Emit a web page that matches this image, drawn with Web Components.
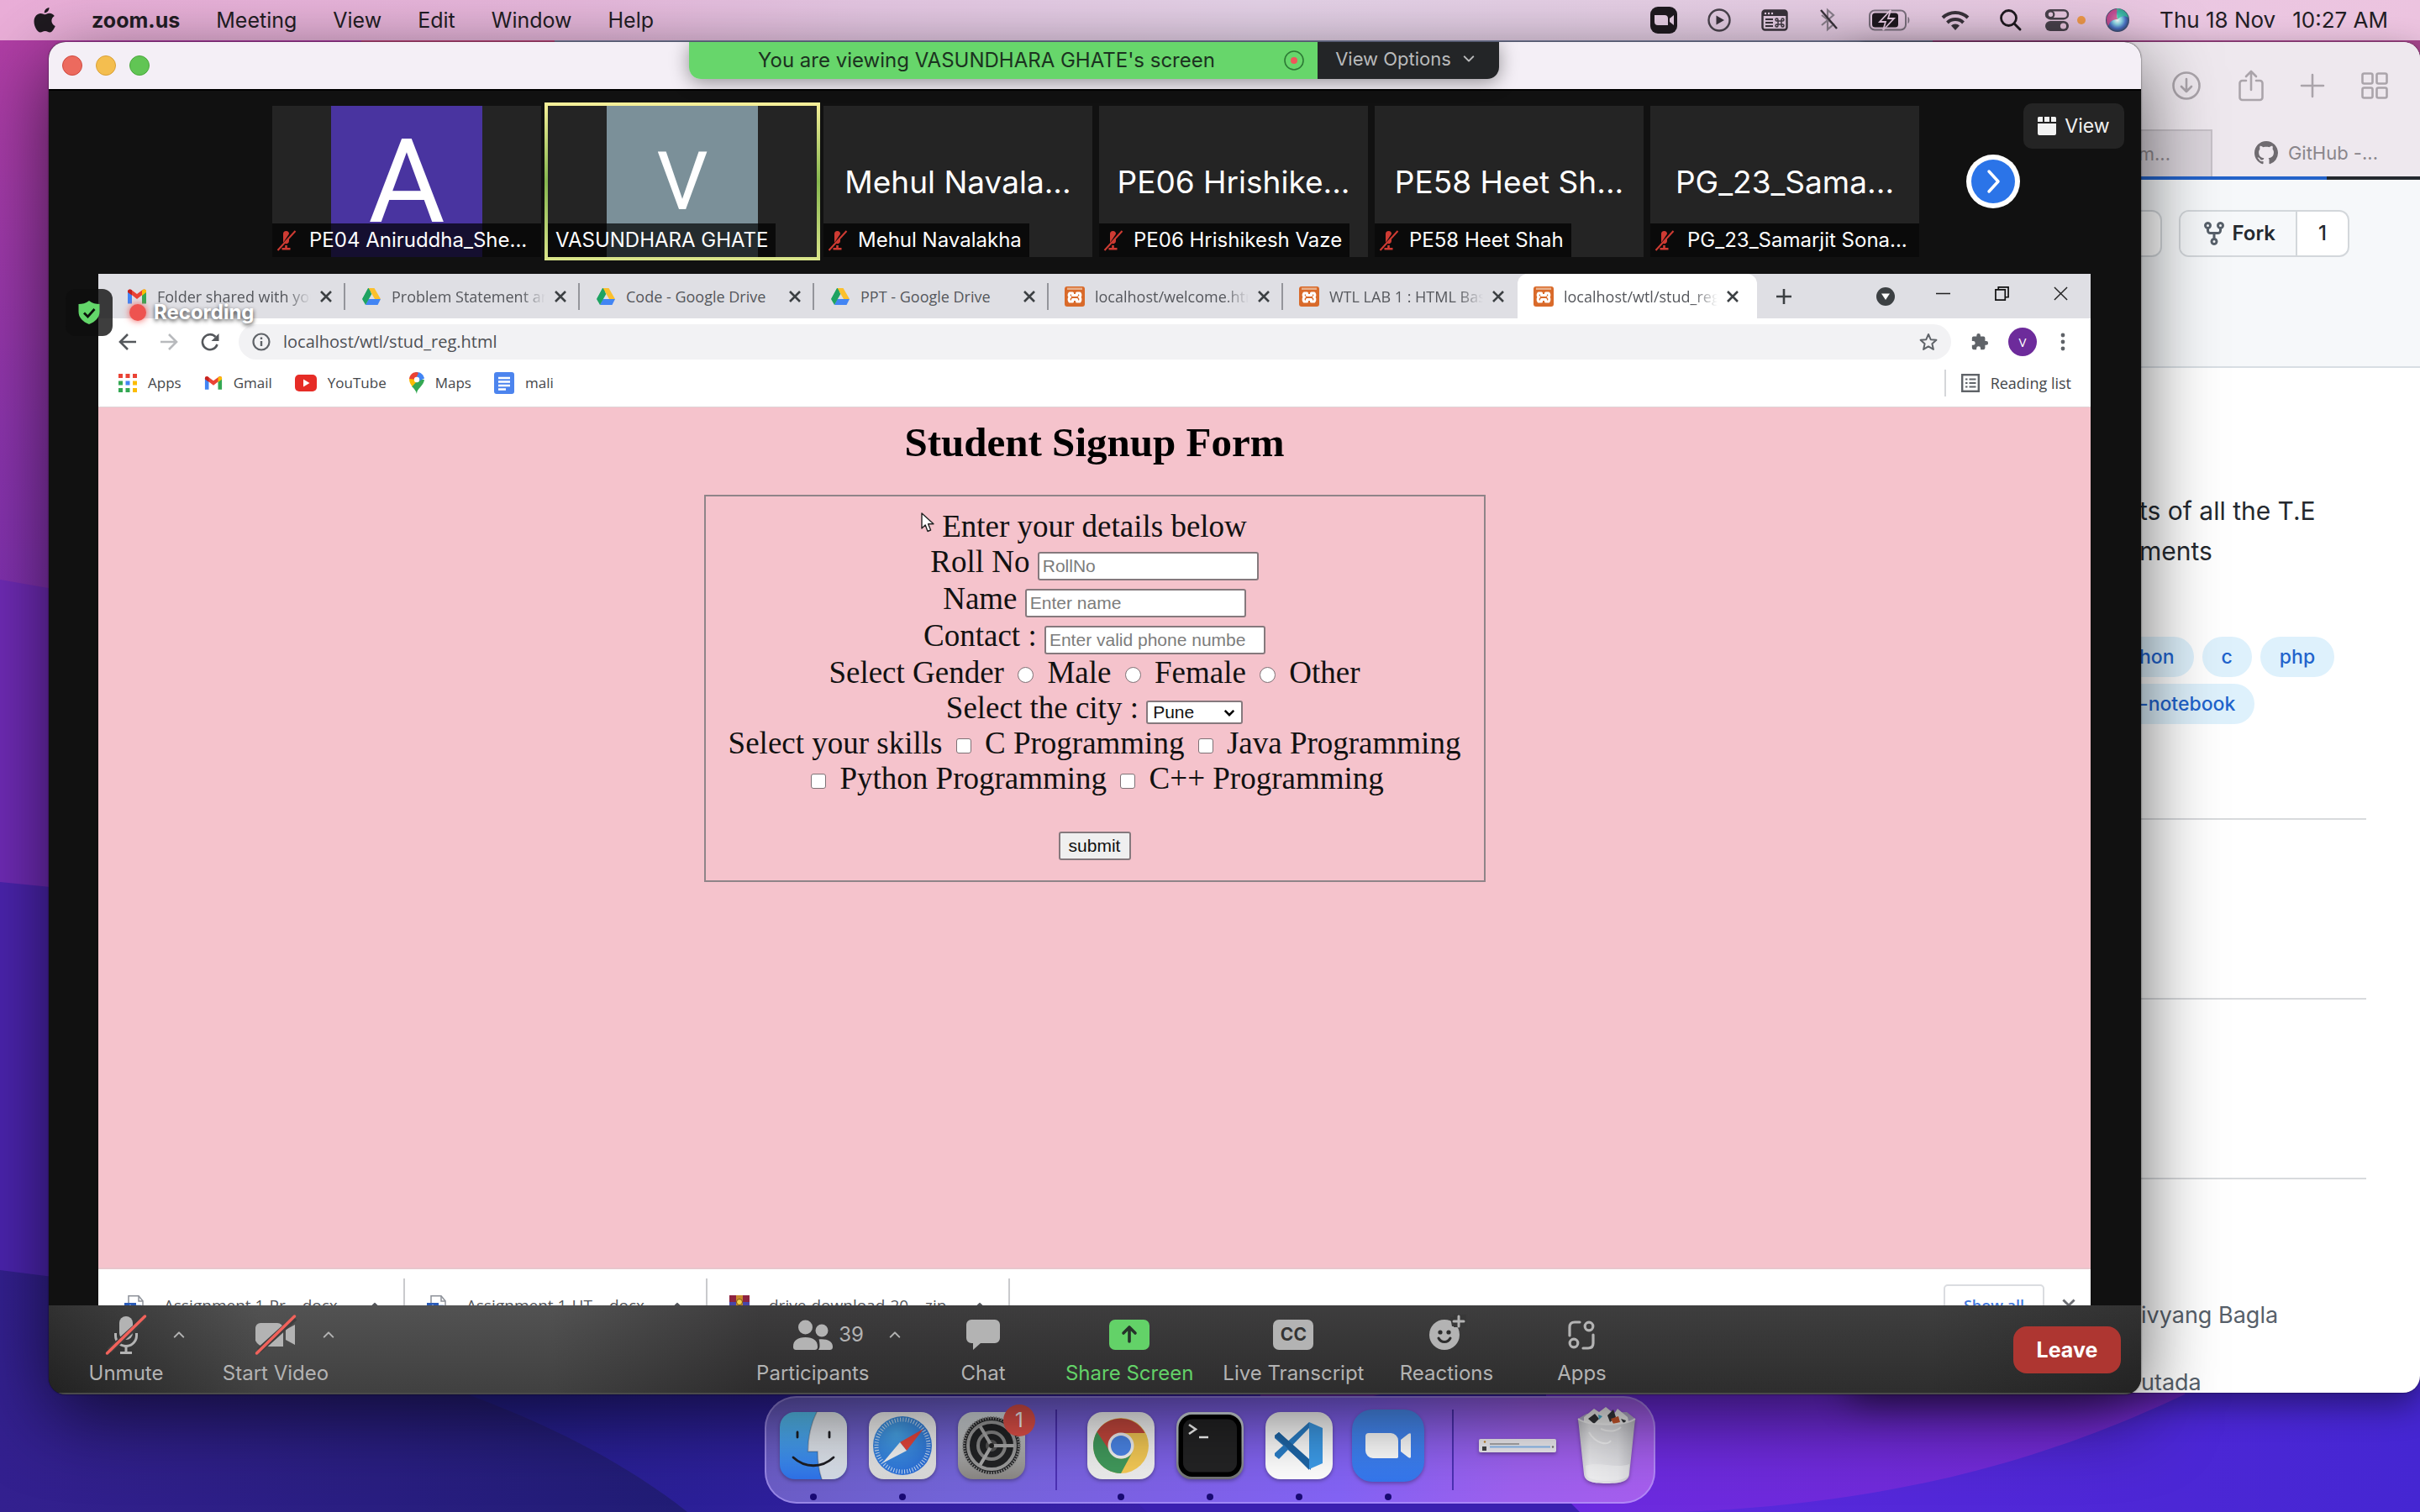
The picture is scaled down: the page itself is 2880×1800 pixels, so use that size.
<!DOCTYPE html>
<html lang="en">
<head>
<meta charset="utf-8">
<title>Zoom Meeting</title>
<style>
  html, body { height: 100%; margin: 0; overflow: hidden; }
  body { font-family: Inter, "Liberation Sans", sans-serif; color: #1f1c22; }
</style>
</head>
<body>
<mac-desktop>
  <menu-bar slot="menu"></menu-bar>
  <safari-window slot="back"></safari-window>
  <zoom-window slot="front">
    <chrome-window>
      <signup-form></signup-form>
    </chrome-window>
  </zoom-window>
  <mac-dock slot="dock"></mac-dock>
</mac-desktop>

<script>
/* ---------- icon set ---------- */
const DRIVE = `<path fill="#1ea362" d="M8 2h5L6 14 1.5 14.500z"/><path fill="#fbc02d" d="M8.500 2h7l7.500 13h-7z"/><path fill="#4285f4" d="M5 22l3.500-7H23l-3.500 7z"/><path fill="#1ea362" d="M8.500 2 1 15l4 7 7.300-13z"/>`;
const GMAIL = `<path fill="#4285f4" d="M1 6v14.500h5V10z"/><path fill="#34a853" d="M18 20.500h5V6l-5 4z"/><path fill="#ea4335" d="M1 6c0-2.500 2.500-3.300 4.300-2L12 9l6.700-5C20.500 2.700 23 3.500 23 6l-5 4.300-6 4.700-6-4.700z"/><path fill="#fbbc04" d="M18 5v6l5-4V5.500C23 3 20 3 18 4.500z"/><path fill="#c5221f" d="M1 6c0-2.500 3-3.200 5-1.500v6L1 7z"/>`;
const XAMPP = `<rect x="0" y="0" width="24" height="24" rx="3" fill="#d96a2a"/><rect x="3" y="1.500" width="18" height="2.500" fill="#e9b08a"/><path fill="none" stroke="#fff" stroke-width="3" stroke-linejoin="round" d="M9.500 10.500V8H6c-1.500 2-1 4 .5 4.500C5 13.500 4.500 16 6 18h3.500v-2.500h5V18H18c1.500-2 1-4.500-.5-5.500C19 12 19.500 10 18 8h-3.500v2.500z"/>`;
const WORD = `<path fill="#fff" stroke="#8d9199" stroke-width="1.500" d="M5 .8h12l5 6V24H5z"/><path fill="none" stroke="#8d9199" stroke-width="1.500" d="M17 1v6h5"/><path stroke="#a9c4ec" stroke-width="1.500" d="M14 12h6M14 16h6M14 20h6"/><rect y="9" width="14" height="14" fill="#2a5bb8"/><path fill="none" stroke="#fff" stroke-width="1.600" d="M3 12.500 5 19l2-6 2 6 2-6.500"/>`;
const MICOFF = `<path fill="#cf3b33" d="M8.500 4.500a3.500 3.500 0 0 1 7 0L8.500 15zM15.500 9v4a3.500 3.500 0 0 1-5 3zM10.700 18h2.600v3H17v2.500H7V21h3.700z"/><path stroke="#cf3b33" stroke-width="2" d="M23 1 2 24"/>`;
const SLASH = `<path stroke="#3f3f3f" stroke-width="7" d="M4 43 47 4"/><path stroke="#f0625b" stroke-width="3.500" stroke-linecap="round" d="M1.500 46 46.500 2"/>`;
const ICONS = {
  apple: ['0 0 26 32', `<path fill="#1f1a20" d="M18.500 1c.3 3.300-2.700 6.500-5.700 6.400C12.400 4.300 15.600 1.200 18.500 1zM13.300 9.300c1.500 0 3-1.500 5.600-1.500 2.500 0 4.700 1.300 5.900 3.200-5 3-4.200 9.800.9 12-1 2.900-3.500 7.300-6.200 7.500-2.300.1-3-1.500-5.800-1.500-2.700 0-3.600 1.500-5.700 1.500C4.500 30.600.5 23.600.5 17.800c0-6.200 4-9.600 7.800-9.700 2.200 0 3.800 1.200 5 1.200z"/>`],
  zoombar: ['0 0 32 32', `<rect width="32" height="32" rx="9" fill="#1f1a20"/><path fill="#ecd3ea" d="M5 10h12a4 4 0 0 1 4 4v8H9a4 4 0 0 1-4-4zM23 14l5-4v12l-5-4z"/>`],
  play: ['0 0 28 28', `<circle cx="14" cy="14" r="12.500" fill="none" stroke="#4a434d" stroke-width="2.400"/><path fill="#3a333c" d="M10.500 8.500 20 14l-9.500 5.500z"/>`],
  cmdwin: ['0 0 32 26', `<rect x="1.500" y="1.500" width="29" height="23" rx="3" fill="none" stroke="#3a333c" stroke-width="2.400"/><path fill="#3a333c" d="M1 2h30v6H1z"/><g fill="#ecd3ea"><circle cx="5" cy="5" r="1.200"/><circle cx="9" cy="5" r="1.200"/><circle cx="13" cy="5" r="1.200"/></g><path stroke="#3a333c" stroke-width="2" d="M5 12h9M5 16h9M5 20h9"/><g fill="none" stroke="#3a333c" stroke-width="1.400"><rect x="20" y="14" width="4" height="4"/><circle cx="18.500" cy="12.500" r="1.500"/><circle cx="25.500" cy="12.500" r="1.500"/><circle cx="18.500" cy="19.500" r="1.500"/><circle cx="25.500" cy="19.500" r="1.500"/></g>`],
  btoff: ['0 0 24 28', `<path fill="none" stroke="#8b808d" stroke-width="2.200" d="M4 8l14 11-7 6V2l7 6L4 20"/><path stroke="#3a333c" stroke-width="2.400" d="M3 2l19 22"/>`],
  battery: ['0 0 50 26', `<rect x="1" y="1.500" width="43" height="23" rx="6" fill="none" stroke="#7d7280" stroke-width="2"/><path fill="#7d7280" d="M46.500 9c2.500 1 2.500 7 0 8z"/><rect x="4" y="4.500" width="31" height="17" rx="3.500" fill="#1f1a20"/><path fill="#1f1a20" stroke="#ecd0e8" stroke-width="1.800" d="M26 1 13 15h7l-3 10 13-14h-7z"/>`],
  wifi: ['0 0 34 24', `<g fill="none" stroke="#3a333c" stroke-width="4"><path d="M2 9a21.500 21.500 0 0 1 30 0"/><path d="M7.500 15a13.500 13.500 0 0 1 19 0"/></g><path fill="#3a333c" d="M17 24l-5-5.500a7 7 0 0 1 10 0z"/>`],
  search: ['0 0 26 26', `<circle cx="10.500" cy="10.500" r="9" fill="none" stroke="#1f1a20" stroke-width="2.800"/><path stroke="#1f1a20" stroke-width="3" stroke-linecap="round" d="M17.500 17.500 24 24"/>`],
  control: ['0 0 28 26', `<rect x="1" y="1.200" width="26" height="10" rx="5" fill="none" stroke="#4a434d" stroke-width="2.400"/><circle cx="6.500" cy="6.200" r="3.800" fill="none" stroke="#4a434d" stroke-width="2.200"/><rect y="14" width="28" height="12" rx="6" fill="#4a434d"/><circle cx="21.500" cy="20" r="3.600" fill="#ecc8e2"/>`],
  siri: ['0 0 28 28', `<defs><radialGradient id="s" cx=".5" cy=".5" r=".5"><stop offset="0" stop-color="#fff"/><stop offset=".35" stop-color="#8fdcea"/><stop offset=".7" stop-color="#4a72c8"/><stop offset="1" stop-color="#3a4a6a"/></radialGradient></defs><circle cx="14" cy="14" r="14" fill="url(#s)"/><path fill="#e0468a" opacity=".8" d="M1 12c1-7 8-12 15-11-4 3-3 8-2 12C9 13 5 15 3 21c-2-3-2-6-2-9z"/><path fill="#35c79a" opacity=".75" d="M13 0c8 0 13 6 14 11-5-3-9-2-13 2z"/>`],
  rec: ['0 0 24 24', `<circle cx="12" cy="12" r="11" fill="none" stroke="#2d7a35" stroke-width="1.600"/><circle cx="12" cy="12" r="4" fill="#f0555a"/>`],
  chevdown: ['0 0 16 10', `<path fill="none" stroke="currentColor" stroke-width="2.400" stroke-linecap="round" stroke-linejoin="round" d="M2 2l6 6 6-6"/>`],
  chevup: ['0 0 16 10', `<path fill="none" stroke="currentColor" stroke-width="2.400" stroke-linecap="round" stroke-linejoin="round" d="M2 8l6-6 6 6"/>`],
  micoff: ['0 0 24 25', MICOFF],
  next: ['0 0 64 64', `<circle cx="32" cy="32" r="32" fill="#fff"/><circle cx="32" cy="32" r="26" fill="#2b74e8"/><path fill="none" stroke="#fff" stroke-width="3.500" stroke-linecap="round" stroke-linejoin="round" d="M27 20l11 12-11 12"/>`],
  gallery: ['0 0 22 22', `<path fill="#f2f2f2" d="M0 1.500A1.500 1.500 0 0 1 1.500 0H6v6H0zM8 0h6v6H8zM16 0h4.500A1.500 1.500 0 0 1 22 1.500V6h-6zM0 8h22v12a2 2 0 0 1-2 2H2a2 2 0 0 1-2-2z"/>`],
  shield: ['0 0 26 28', `<path fill="#63d66a" d="M13 0c4 3 8 4 12.500 4v9c0 7-5 12-12.500 15C5.500 25 .5 20 .5 13V4C5 4 9 3 13 0z"/><path fill="none" stroke="#0b120c" stroke-width="2.800" d="M7 14.500l4.500 4.500 8-9"/>`],
  gmail: ['0 0 24 24', GMAIL], drive: ['0 0 24 24', DRIVE], xampp: ['0 0 24 24', XAMPP],
  word: ['0 0 24 24', WORD],
  rar: ['0 0 24 24', `<rect width="24" height="8" fill="#8d2340"/><rect y="8" width="24" height="8" fill="#4747a8"/><rect y="16" width="24" height="8" fill="#2f7a45"/><rect x="8" width="8" height="24" fill="#c88a2c"/><circle cx="12" cy="8" r="3.500" fill="#f2d24a" stroke="#7a4b10"/>`],
  x: ['0 0 20 20', `<path stroke="currentColor" stroke-width="2.600" d="M4 4l12 12M16 4 4 16"/>`],
  plus: ['0 0 20 20', `<path stroke="currentColor" stroke-width="2.600" d="M10 1v18M1 10h18"/>`],
  drop: ['0 0 22 22', `<circle cx="11" cy="11" r="11" fill="#3c4043"/><path fill="#fff" d="M6 7.500h10L11 15z"/>`],
  min: ['0 0 18 18', `<path stroke="#222" stroke-width="1.600" d="M0 9h18"/>`],
  restore: ['0 0 18 18', `<path fill="none" stroke="#111" stroke-width="1.800" d="M1 4h12v13H1zM4.500 4V1H17v12.500h-4"/>`],
  close: ['0 0 18 18', `<path stroke="#222" stroke-width="1.500" d="M1 1l16 16M17 1 1 17"/>`],
  back: ['0 0 22 22', `<path fill="none" stroke="currentColor" stroke-width="2.600" d="M21 11H3M11 2l-9 9 9 9"/>`],
  fwd: ['0 0 22 22', `<path fill="none" stroke="currentColor" stroke-width="2.600" d="M1 11h18M11 2l9 9-9 9"/>`],
  reload: ['0 0 22 22', `<path fill="none" stroke="#55585c" stroke-width="2.600" d="M19.500 14A9 9 0 1 1 17.500 5"/><path fill="#55585c" d="M21.500 1v9h-9z"/>`],
  info: ['0 0 22 22', `<circle cx="11" cy="11" r="9.500" fill="none" stroke="#5f6368" stroke-width="2.200"/><path stroke="#5f6368" stroke-width="2.400" d="M11 10v6M11 5.500V8"/>`],
  star: ['0 0 22 22', `<path fill="none" stroke="#5f6368" stroke-width="2" stroke-linejoin="round" d="M11 2l2.700 6.200 6.700.6-5 4.500 1.500 6.600L11 16.400l-5.900 3.500 1.500-6.600-5-4.500 6.700-.6z"/>`],
  puzzle: ['0 0 24 24', `<path fill="#5f6368" d="M20.500 11H19V7a2 2 0 0 0-2-2h-4V3.500a2.500 2.500 0 0 0-5 0V5H4a2 2 0 0 0-2 2v3.800h1.500a2.700 2.700 0 0 1 0 5.400H2V20a2 2 0 0 0 2 2h3.800v-1.500a2.700 2.700 0 0 1 5.400 0V22H17a2 2 0 0 0 2-2v-4h1.500a2.500 2.500 0 0 0 0-5z"/>`],
  dots: ['0 0 6 22', `<g fill="#5f6368"><circle cx="3" cy="3" r="2.400"/><circle cx="3" cy="11" r="2.400"/><circle cx="3" cy="19" r="2.400"/></g>`],
  apps: ['0 0 22 22', `<path fill="#ea4335" d="M0 0h5v5H0zM8.500 0h5v5h-5zM17 0h5v5h-5z"/><path fill="#34a853" d="M0 8.500h5v5H0zM0 17h5v5H0zM8.500 17h5v5h-5z"/><path fill="#4285f4" d="M8.500 8.500h5v5h-5z"/><path fill="#fbbc04" d="M17 8.500h5v5h-5zM17 17h5v5h-5z"/>`],
  youtube: ['0 0 26 20', `<rect width="26" height="20" rx="5" fill="#e62c26"/><path fill="#fff" d="M10 5.500 17.500 10 10 14.500z"/>`],
  maps: ['0 0 18 26', `<path fill="#34a853" d="M9 26c0-7 8-9 9-17L9 9 3 17c3 3 5 5 6 9z"/><path fill="#4285f4" d="M9 0c5 0 8 3.500 9 7.500L9 12 7 .2z"/><path fill="#ea4335" d="M9 0C4 0 .5 3.500 0 8l6 4 5-11z"/><path fill="#fbbc04" d="M0 8c0 4 1.500 6.500 3.500 9L11 9z"/><circle cx="9" cy="9" r="3.200" fill="#fff"/>`],
  doc: ['0 0 24 26', `<rect width="24" height="26" rx="3" fill="#4c84ee"/><path stroke="#fff" stroke-width="2.400" d="M5 7h14M5 11.500h14M5 16h14M5 20.500h9"/>`],
  reading: ['0 0 22 22', `<rect x="1.200" y="1.200" width="19.600" height="19.600" fill="none" stroke="#5f6368" stroke-width="2.400"/><path stroke="#5f6368" stroke-width="2" d="M5 6.500h2.500M9.500 6.500h8M5 11h2.500M9.500 11h8M5 15.500h2.500M9.500 15.500h8"/>`],
  cursor: ['0 0 16 24', `<path fill="#fff" stroke="#222" stroke-width="1.400" stroke-linejoin="round" d="M1 1v18l4.200-4 2.800 7.500 3.600-1.500-3-7.200H15z"/>`],
  mic: ['0 0 48 48', `<g fill="#b3b3b3"><rect x="16" y="2" width="16" height="28" rx="8"/><path d="M10 22h3v3a11 11 0 0 0 22 0v-3h3v3a14 14 0 0 1-12.500 13.900V44H31v3H17v-3h5.500v-5.100A14 14 0 0 1 10 25z"/></g>${SLASH}`],
  video: ['0 0 48 48', `<path fill="#b3b3b3" d="M6 10h20a7 7 0 0 1 7 7v21H13a13 13 0 0 1-13-7V16a6 6 0 0 1 6-6zM36 18l11-6v24l-11-6z"/>${SLASH}`],
  people: ['0 0 48 48', `<g fill="#b3b3b3"><circle cx="15.500" cy="15" r="8.500"/><circle cx="35" cy="19" r="7.500"/><path d="M1 38c0-7 5-11 14.500-11S30 31 30 38c0 3-1 4-4 4H5c-3 0-4-1-4-4zM31.500 29.500C41 28.500 48 32 48 38c0 3-1 4-4 4H31c1-1.500 1.500-3 1.500-5 0-3-.3-5.500-1-7.500z"/></g>`],
  chat: ['0 0 48 48', `<path fill="#b3b3b3" d="M10 6h28a6 6 0 0 1 6 6v16a6 6 0 0 1-6 6H21l-9 8v-8h-2a6 6 0 0 1-6-6V12a6 6 0 0 1 6-6z"/>`],
  share: ['0 0 48 48', `<rect y="6" width="48" height="36" rx="7" fill="#63d268"/><path fill="none" stroke="#26332a" stroke-width="3.600" stroke-linecap="round" stroke-linejoin="round" d="M24 32V16M17 22l7-7 7 7"/>`],
  react: ['0 0 48 48', `<circle cx="22" cy="24" r="18" fill="#b3b3b3"/><path fill="#383838" d="M33 0h15v15H33z"/><path fill="#383838" d="M29 3h8v11h-6z"/><path stroke="#b3b3b3" stroke-width="3" stroke-linecap="round" d="M39 2v12M33 8h12"/><circle cx="17" cy="21" r="2.600" fill="#2c2c2c"/><circle cx="27" cy="21" r="2.600" fill="#2c2c2c"/><path fill="none" stroke="#2c2c2c" stroke-width="3" stroke-linecap="round" d="M15 28c3 6 11 6 14 0"/>`],
  zapps: ['0 0 48 48', `<g fill="none" stroke="#b3b3b3" stroke-width="3.200" stroke-linecap="round"><path d="M10 25V15c0-4 2-6 6-6h6M38 24v10c0 4-2 6-6 6h-6"/><circle cx="33" cy="14" r="4.800"/><circle cx="15" cy="34" r="4.800"/></g>`],
  download: ['0 0 36 36', `<circle cx="18" cy="18" r="15.500" fill="none" stroke="#aaa4aa" stroke-width="2.600"/><path fill="none" stroke="#aaa4aa" stroke-width="2.600" stroke-linecap="round" stroke-linejoin="round" d="M18 10v15M12 19l6 6 6-6"/>`],
  shareup: ['0 0 30 38', `<path fill="none" stroke="#aaa4aa" stroke-width="2.600" stroke-linecap="round" stroke-linejoin="round" d="M9 13H4.500A3 3 0 0 0 1.500 16v17a3 3 0 0 0 3 3h21a3 3 0 0 0 3-3V16a3 3 0 0 0-3-3H21M15 24V2M9 8l6-6 6 6"/>`],
  thinplus: ['0 0 28 28', `<path stroke="#aaa4aa" stroke-width="2.600" stroke-linecap="round" d="M14 1v26M1 14h26"/>`],
  grid: ['0 0 32 32', `<g fill="none" stroke="#aaa4aa" stroke-width="2.600"><rect x="1.500" y="1.500" width="12" height="12" rx="2"/><rect x="18.500" y="1.500" width="12" height="12" rx="2"/><rect x="1.500" y="18.500" width="12" height="12" rx="2"/><rect x="18.500" y="18.500" width="12" height="12" rx="2"/></g>`],
  github: ['0 0 16 16', `<path fill="#6f6b70" d="M8 0C3.580 0 0 3.580 0 8c0 3.540 2.290 6.530 5.470 7.590.4.070.55-.17.55-.38 0-.19-.01-.82-.01-1.490-2.010.37-2.530-.49-2.690-.94-.09-.23-.48-.94-.82-1.130-.28-.15-.68-.52-.01-.53.63-.01 1.080.58 1.230.82.72 1.210 1.870.87 2.330.66.07-.52.28-.87.51-1.070-1.780-.2-3.640-.89-3.640-3.950 0-.87.31-1.590.82-2.150-.08-.2-.36-1.020.08-2.120 0 0 .67-.21 2.200.82.64-.18 1.320-.27 2-.27s1.360.09 2 .27c1.530-1.040 2.200-.82 2.200-.82.44 1.100.16 1.920.08 2.120.51.56.82 1.270.82 2.150 0 3.070-1.870 3.750-3.650 3.950.29.25.54.73.54 1.480 0 1.070-.01 1.930-.01 2.200 0 .21.15.46.55.38A8 8 0 0 0 16 8c0-4.420-3.580-8-8-8z"/>`],
  fork: ['0 0 16 16', `<path fill="#57606a" fill-rule="evenodd" d="M5 3.250a.75.75 0 1 1-1.500 0 .75.75 0 0 1 1.500 0zm0 2.122a2.250 2.250 0 1 0-1.500 0v.878A2.250 2.250 0 0 0 5.750 8.500h1.500v2.128a2.251 2.251 0 1 0 1.500 0V8.500h1.500a2.250 2.250 0 0 0 2.250-2.250v-.878a2.250 2.250 0 1 0-1.500 0v.878a.75.75 0 0 1-.75.75h-4.500A.75.75 0 0 1 5 6.250v-.878zm3.750 7.378a.75.75 0 1 1-1.500 0 .75.75 0 0 1 1.500 0zm3-8.750a.75.75 0 1 0 0-1.500.75.75 0 0 0 0 1.500z"/>`],
  finder: ['0 0 80 80', `<defs><linearGradient id="a" x2="0" y2="1"><stop stop-color="#5ac8f8"/><stop offset="1" stop-color="#2f72ea"/></linearGradient><linearGradient id="b" x2="0" y2="1"><stop stop-color="#eef0f4"/><stop offset="1" stop-color="#d3dbe6"/></linearGradient><clipPath id="c"><rect width="80" height="80" rx="18"/></clipPath></defs><g clip-path="url(#c)"><rect width="80" height="80" fill="url(#a)"/><path fill="url(#b)" d="M44 0C37 14 33.500 30 33.500 47H45c0 12 1.500 23 5 33h30V0z"/></g><g fill="none" stroke="#1d1d22" stroke-width="2.800" stroke-linecap="round"><path d="M21 24v6M59 24v6M16 54c14 13 34 13 48 0"/><path stroke-width="1.500" d="M44 0C37 14 33.500 30 33.500 47H45c0 12 1.500 23 5 33" opacity=".25"/></g>`],
  safari: ['0 0 80 80', `<defs><linearGradient id="a" x2="0" y2="1"><stop stop-color="#fff"/><stop offset="1" stop-color="#d9d9d9"/></linearGradient><radialGradient id="b" cx=".4" cy=".3" r=".8"><stop stop-color="#4aa8ec"/><stop offset="1" stop-color="#2768d6"/></radialGradient></defs><rect width="80" height="80" rx="18" fill="url(#a)"/><circle cx="40" cy="40" r="35" fill="url(#b)"/><circle cx="40" cy="40" r="31" fill="none" stroke="#fff" stroke-width="5" stroke-dasharray="1 2.250" opacity=".75"/><path fill="#e8453c" d="M65 20 45 46l-8-10z"/><path fill="#f4f4f4" d="M16 61 37 36l8 10z"/>`],
  prefs: ['0 0 80 80', `<defs><linearGradient id="a" x2="0" y2="1"><stop stop-color="#dde3e8"/><stop offset="1" stop-color="#8a8784"/></linearGradient></defs><rect width="80" height="80" rx="18" fill="url(#a)"/><circle cx="40" cy="40" r="34" fill="#222325"/><circle cx="40" cy="40" r="33" fill="none" stroke="#8b8b8b" stroke-width="4" stroke-dasharray="1.600 1.600"/><circle cx="40" cy="40" r="28" fill="none" stroke="#9b9b9b" stroke-width="4"/><circle cx="40" cy="40" r="16" fill="none" stroke="#888" stroke-width="4"/><circle cx="40" cy="40" r="7" fill="#555"/><path stroke="#a9a9a9" stroke-width="4" d="M40 40h27M40 40 26.500 17M40 40 26.500 63"/><circle cx="40" cy="40" r="3" fill="#222"/>`],
  chrome: ['0 0 80 80', `<defs><linearGradient id="a" x2="0" y2="1"><stop stop-color="#fff"/><stop offset="1" stop-color="#ececec"/></linearGradient></defs><rect width="80" height="80" rx="18" fill="url(#a)"/><circle cx="40" cy="40" r="33" fill="#f5ca55"/><path fill="#c9493e" d="M11.400 23.500A33 33 0 0 1 68.600 25H40a15 15 0 0 0-14.300 10.500L25 47z"/><path fill="#419a5c" d="M11.400 23.500A33 33 0 0 0 40 73l14-26a15 15 0 0 1-27 0z"/><circle cx="40" cy="40" r="15.500" fill="#f3f3f3"/><circle cx="40" cy="40" r="12" fill="#4b86e8"/>`],
  terminal: ['0 0 80 80', `<defs><linearGradient id="a" x2="0" y2="1"><stop stop-color="#dfe9ee"/><stop offset="1" stop-color="#6f7072"/></linearGradient></defs><rect width="80" height="80" rx="18" fill="url(#a)"/><rect x="2.500" y="3" width="75" height="74" rx="16" fill="#000"/><rect x="8" y="8.500" width="64" height="63" rx="11" fill="#232324"/><path fill="none" stroke="#fff" stroke-width="2.600" d="M15 15l8 5.500-8 5.500M27 30h11"/>`],
  vscode: ['0 0 80 80', `<rect width="80" height="80" rx="18" fill="#fff"/><path fill="#2673b8" d="M11 28l5-4 38 38v7L11 31z"/><path fill="#2a7fc9" d="M11 52l5 4 36-37V12L11 49z"/><path fill="#1f67a8" d="M11 28l5-4 36 32v13z"/><path fill="#3c9be8" d="M52 12l16 7v42l-16 7z"/>`],
  zoomapp: ['0 0 86 86', `<defs><linearGradient id="a" x2="0" y2="1"><stop stop-color="#4b90f8"/><stop offset="1" stop-color="#3577ee"/></linearGradient></defs><rect width="86" height="86" rx="24" fill="url(#a)"/><path fill="#fff" d="M16 32a4 4 0 0 1 4-4h26a9 9 0 0 1 9 9v20a4 4 0 0 1-2 1H25a9 9 0 0 1-9-9zM58 36l9-7c2-1 3-1 3 1v26c0 2-1 2-3 1l-9-7z"/>`],
  miniwin: ['0 0 92 16', `<rect width="92" height="16" rx="2" fill="#f1eff4"/><circle cx="7" cy="3.500" r="1.200" fill="#c98a2c"/><rect x="4" y="9" width="5" height="5" fill="#444"/><path stroke="#666" stroke-width="1" d="M13 6h35"/><path stroke="#8dbdf2" stroke-width="1.800" d="M13 9.500h72"/><circle cx="88" cy="9.500" r="1.200" fill="#777"/>`],
  trash: ['0 0 70 92', `<defs><linearGradient id="a"><stop stop-color="#c9c9ce"/><stop offset=".2" stop-color="#e9e9ec"/><stop offset=".7" stop-color="#dedee2"/><stop offset="1" stop-color="#bdbdc3"/></linearGradient></defs><path fill="#b5aeca" d="M1 14l10-6 48-2 10 8-1 6H2z"/><path fill="#f5f5f5" d="M8 12 20 2l6 4 8-6 10 8 4-6 12 10 2 10H8z"/><path fill="#35373b" d="M13 14l8-6 5 6-6 6zM36 10l7-7 3 9-7 6zM52 14l6 2-2 5z"/><path fill="#d1582c" d="M40 14l9-3 2 7-8 2z"/><path fill="#47b6d6" d="M25 9l5 2-4 4z"/><path fill="url(#a)" d="M1 14c12 9 56 9 68 0l-7 66c-1 8-8 11-27 11S9 88 8 80z"/><path fill="none" stroke="#fff" stroke-width="2" opacity=".7" d="M1 14c12 9 56 9 68 0M28 26c14 6 22 0 24-2M14 30c8 14 22 16 26 10"/><path fill="#fff" opacity=".35" d="M10 70c14-6 36 4 52-2l-1 14c-8 8-42 8-50 0z"/>`]
};

const define = (name, html) => customElements.define(name, class extends HTMLElement {
  connectedCallback() {
    if (this.shadowRoot) return;
    const root = this.attachShadow({ mode: 'open' });
    const t = document.createElement('template');
    t.innerHTML = typeof html === 'function' ? html(this) : html;
    root.append(t.content.cloneNode(true));
  }
});

define('ui-icon', el => {
  const [box, body] = ICONS[el.getAttribute('name')];
  return `<style>:host{display:block;flex:none}svg{display:block;width:100%;height:100%;overflow:visible}</style>
  <svg viewBox="${box}" aria-hidden="true">${body}</svg>`;
});

/* ---------- desktop ---------- */
define('mac-desktop', `
<style>
  :host{display:block;position:relative;height:100vh;overflow:hidden;background:#2a1d80}
  .wall{position:absolute;inset:0;width:100%;height:100%}
  slot[name=menu]::slotted(*){position:relative}
  slot[name=back]::slotted(*){position:absolute;left:2200px;right:0;top:50px;bottom:142px}
  slot[name=front]::slotted(*){position:absolute;left:58px;right:332px;top:50px;bottom:140px}
  .dock{position:absolute;inset:auto 0 10px;display:flex;justify-content:center}
</style>
<svg class="wall" viewBox="0 0 2880 1800" preserveAspectRatio="none" aria-hidden="true">
  <defs>
    <linearGradient id="w1" x2="0" y2="1"><stop stop-color="#b43fa4"/><stop offset=".28" stop-color="#8d35ad"/><stop offset=".6" stop-color="#6a2ab2"/></linearGradient>
    <linearGradient id="w2" x2="1" y2="0"><stop stop-color="#33208f"/><stop offset="1" stop-color="#1f1c72"/></linearGradient>
    <linearGradient id="w3" x2="1" y2="0"><stop stop-color="#231f8c"/><stop offset="1" stop-color="#3c20ae"/></linearGradient>
    <linearGradient id="w4" x2="1" y2="0"><stop stop-color="#6a2ae0"/><stop offset="1" stop-color="#7a2bd0"/></linearGradient>
    <linearGradient id="w5" x2="1" y2="0"><stop stop-color="#5a29dc"/><stop offset="1" stop-color="#4526d2"/></linearGradient>
  </defs>
  <rect width="2880" height="1800" fill="url(#w1)"/>
  <path fill="#c24a80" d="M430 40h240v12H430z"/><path fill="#7f86a6" d="M660 40h1900v12H660z"/><path fill="#a8478e" d="M2300 40h580v300h-580z"/>
  <path fill="#6f2bb6" d="M0 690 400 760v500H0z"/>
  <path fill="#4b24ae" d="M0 1050 400 1090v600H0z"/>
  <path fill="url(#w2)" d="M0 1512 300 1550 900 1600v200H0z"/>
  <path fill="url(#w3)" d="M500 1640c120 40 230 90 318 160H1500V1600z"/>
  <path fill="#3a20b0" d="M1300 1740 1365 1800H1900V1600z"/>
  <path fill="url(#w4)" d="M1840 1600V1760l40 40H2880V1600z"/>
  <path fill="url(#w5)" d="M2000 1800c250-10 430-60 600-140V1500h280v300z"/>
</svg>
<slot name="menu"></slot><slot name="back"></slot>
<div class="dock"><slot name="dock"></slot></div>
<slot name="front"></slot>`);

/* ---------- menu bar ---------- */
define('menu-bar', `
<style>
  :host{display:block}
  header{height:48px;display:flex;align-items:center;justify-content:space-between;padding:0 38px 0 40px;
    font-size:25px;line-height:32px;white-space:nowrap;color:#231e25;
    background:linear-gradient(90deg,#eaaed8 0,#e8b9dd 24%,#e6c8e4 36%,#e6d3e9 52%,#e8cfe6 74%,#ecc3df 100%)}
  nav,.status{display:flex;align-items:center}
  nav{gap:43px} nav b{font-weight:700}
  nav ui-icon{width:26px;height:32px}
  a{color:inherit;text-decoration:none}
  .status{gap:36px}
  .i32{width:32px;height:32px}.i28{width:28px;height:28px}.cmd{width:32px;height:26px}
  .bt{width:24px;height:28px}.bat{width:50px;height:26px}.wifi{width:34px;height:24px}
  .s26{width:26px;height:26px}.cc{display:flex;align-items:center;gap:10px;margin:0 -12px 0 -8px}.cc ui-icon{width:28px;height:26px}
  .dot{width:10px;height:10px;border-radius:50%;background:#f39c4b}
  time{display:flex;gap:20px;font-size:26px}
</style>
<header>
  <nav><ui-icon name="apple"></ui-icon><b>zoom.us</b><a href="#">Meeting</a><a href="#">View</a><a href="#">Edit</a><a href="#">Window</a><a href="#">Help</a></nav>
  <div class="status">
    <ui-icon class="i32" name="zoombar"></ui-icon><ui-icon class="i28" name="play"></ui-icon>
    <ui-icon class="cmd" name="cmdwin"></ui-icon><ui-icon class="bt" name="btoff"></ui-icon>
    <ui-icon class="bat" name="battery"></ui-icon><ui-icon class="wifi" name="wifi"></ui-icon>
    <ui-icon class="s26" name="search"></ui-icon>
    <span class="cc"><ui-icon name="control"></ui-icon><span class="dot"></span></span>
    <ui-icon class="i28" name="siri"></ui-icon>
    <time><span>Thu 18 Nov</span><span>10:27 AM</span></time>
  </div>
</header>`);

/* ---------- background browser window ---------- */
define('safari-window', `
<style>
  :host{display:flex;flex-direction:column;background:#fff;border-radius:20px;overflow:hidden;
    box-shadow:0 0 2px rgba(0,0,0,.6),0 14px 40px rgba(0,0,0,.45);white-space:nowrap}
  .tools,.tabs,.line,.head,.side{flex:none}
  .tools{display:flex;justify-content:flex-end;align-items:center;gap:44px;height:104px;padding-right:38px;background:#eee8ee;box-sizing:border-box}
  .dl{width:36px;height:36px}.sh{width:30px;height:38px}.pl{width:28px;height:28px}.gr{width:32px;height:32px}
  .tabs{display:flex;height:56px;background:#eee8ee;font-size:22px;line-height:28px;color:#8f898f}
  .tab{display:flex;align-items:center;justify-content:flex-end;box-sizing:border-box}
  .tab.off{flex:1;background:#dad4db;border:2px solid #c6c0c7;border-width:2px 2px 0 0;padding-right:48px}
  .tab.on{width:247px;padding-right:50px;gap:12px;color:#8a868b}
  .tab ui-icon{width:28px;height:28px}
  .line{height:4px;background:linear-gradient(90deg,#2463c9 569px,#24292f 569px)}
  .head{height:224px;background:#f6f8fa;border-bottom:2px solid #d8dee4;display:flex;justify-content:flex-end;align-items:flex-start;gap:20px;padding:36px 84px 0 0;box-sizing:border-box}
  .btns{display:flex;height:56px;border:2px solid #d3d7db;border-radius:12px;box-sizing:border-box;overflow:hidden;background:#fff}
  .btns.blank{width:200px}
  button{font:600 24px/32px Inter,sans-serif;color:#24292f;border:0;background:#f6f8fa;display:flex;align-items:center;gap:6px;padding:0 24px}
  button ui-icon{width:32px;height:32px}
  .count{border-left:2px solid #d3d7db;padding:0 25px;font:500 24px/52px Inter,sans-serif;color:#24292f}
  .side{padding:0 64px 0 0;display:flex;flex-direction:column}
  .about{font-size:30px;line-height:48px;color:#24292f;margin:146px 0 0;padding-left:346px}
  .topics{display:flex;flex-wrap:wrap;gap:8px 10px;margin-top:78px;font:500 23px/48px Inter,sans-serif}
  .topics.second{margin-top:8px}
  .topics a{color:#2163cc;text-decoration:none;background:#def1fc;border-radius:24px;padding:0 23px}
  .topics a:first-child{padding-left:346px;border-radius:0 24px 24px 0}
  hr{border:0;border-top:2px solid #d8dadd;margin:112px 0 0;width:100%}
  hr+hr{margin-top:212px}
  .people{margin-top:144px;font-size:27px;line-height:36px;color:#57606a;padding-left:348px}
  .people p{margin:0 0 44px}
</style>
<div class="tools"><ui-icon class="dl" name="download"></ui-icon><ui-icon class="sh" name="shareup"></ui-icon><ui-icon class="pl" name="thinplus"></ui-icon><ui-icon class="gr" name="grid"></ui-icon></div>
<div class="tabs"><div class="tab off">m...</div><div class="tab on"><ui-icon name="github"></ui-icon><span>GitHub -...</span></div></div>
<div class="line"></div>
<div class="head"><div class="btns blank"></div><div class="btns"><button><ui-icon name="fork"></ui-icon>Fork</button><span class="count">1</span></div></div>
<div class="side">
  <p class="about">ts of all the T.E<br>ments</p>
  <div class="topics"><a href="#">hon</a><a href="#">c</a><a href="#">php</a></div>
  <div class="topics second"><a href="#">-notebook</a></div>
  <hr><hr><hr>
  <div class="people"><p>ivyang Bagla</p><p>utada</p></div>
</div>`);

/* ---------- meeting participant tile ---------- */
define('participant-tile', el => {
  const a = n => el.getAttribute(n);
  return `
<style>
  :host{display:block;position:relative;width:320px;height:180px;background:#242424;color:#fff;white-space:nowrap}
  .stage{height:100%;display:flex;align-items:center;justify-content:center;font-size:37px}
  .avatar{width:180px;height:180px;background:${a('color')};font:${a('size')}px/180px Roboto,sans-serif;text-align:center}
  .frame{position:absolute;inset:-4px;border:4px solid;border-image:linear-gradient(#f8f09a,#86b74e 50%,#dbe58b) 4}
  .label{position:absolute;left:0;bottom:0;height:40px;max-width:100%;box-sizing:border-box;display:flex;align-items:center;gap:11px;
    background:rgba(0,0,0,.7);font:24px/40px Inter,sans-serif;padding:0 9px 0 3px}
  :host([wide]) .label{width:100%;gap:14px}
  :host([active]) .label{padding-left:9px}
  ui-icon{width:27px;height:25px}
</style>
<div class="stage">${a('avatar') ? `<div class="avatar">${a('avatar')}</div>` : `<span>${a('short')}</span>`}</div>
${el.hasAttribute('active') ? '<div class="frame"></div>' : ''}
<div class="label">${el.hasAttribute('active') ? '' : '<ui-icon name="micoff"></ui-icon>'}<slot></slot></div>`;
});

/* ---------- meeting toolbar item ---------- */
define('tool-item', el => {
  const a = n => el.getAttribute(n) || '';
  const icon = a('icon') === 'cc' ? '<span class="cc">CC</span>' : `<ui-icon name="${a('icon')}"></ui-icon>`;
  return `
<style>
  :host{display:flex;flex-direction:column;align-items:center;min-width:126px;color:#b3b3b3;font-size:24px;line-height:30px;white-space:nowrap}
  .top{display:grid;grid-template-columns:1fr 48px 1fr;align-items:center;width:100%}
  ui-icon{width:48px;height:48px}
  .extra{display:flex;align-items:center}
  .num{margin-left:7px;font-size:24px;line-height:24px}
  button{all:unset;display:block;font:inherit;color:inherit;text-align:center}
  .caret{margin-left:32px;width:14px}
  .num+.caret{margin-left:30px}
  .caret ui-icon{width:14px;height:10px}
  .main{grid-column:2}
  .label{margin-top:7px}
  :host([green]) .label{color:#63d268}
  .cc{display:block;width:48px;height:36px;border-radius:7px;background:#b3b3b3;color:#333;font:700 21px/36px Inter,sans-serif;text-align:center;margin:6px 0}
</style>
<div class="top"><span></span><button class="main" aria-label="${el.textContent.trim()}">${icon}</button>
<span class="extra">${a('count') ? `<span class="num">${a('count')}</span>` : ''}${el.hasAttribute('caret') ? '<button class="caret" aria-label="More"><ui-icon name="chevup"></ui-icon></button>' : ''}</span></div>
<span class="label"><slot></slot></span>`;
});

/* ---------- zoom meeting window ---------- */
define('zoom-window', `
<style>
  :host{display:flex;flex-direction:column;border-radius:20px;overflow:hidden;background:#111;
    box-shadow:0 0 2px rgba(0,0,0,.7),0 24px 90px rgba(0,0,0,.62)}
  .title{height:56px;background:#f4eff6;border-bottom:2px solid #000;display:flex;align-items:flex-start;padding-left:16px;white-space:nowrap}
  .lights{display:flex;gap:16px;padding-top:16px;flex:1}
  .lights i{width:24px;height:24px;border-radius:50%;box-sizing:border-box}
  .r{background:#ec6a5e;border:1px solid #d0493f}.y{background:#f4be4f;border:1px solid #d9a036}.g{background:#61c554;border:1px solid #4aa73c}
  .banner{display:flex;height:44px;border-radius:0 0 14px 14px;overflow:hidden;box-shadow:0 4px 22px rgba(0,0,0,.4);font-size:24px;line-height:44px}
  .msg{width:748px;background:#67d66b;color:#1b3220;display:flex;align-items:center;box-sizing:border-box;padding:0 16px 0 0}
  .msg span{flex:1;text-align:center}
  .msg ui-icon{width:24px;height:24px}
  .opt{all:unset;width:216px;height:40px;box-sizing:border-box;color:#b9babb;display:flex;align-items:center;justify-content:center;gap:14px;font-size:22px;line-height:40px;padding-right:8px}
  .optbg{background:#232527}
  .opt ui-icon{width:14px;height:10px}
  .balance{flex:1;padding-right:18px}
  .strip{display:grid;grid-template-columns:1fr auto 1fr;padding:15px 0 20px 2px}
  .tiles{display:flex;gap:8px;margin-top:3px;grid-column:2}
  .right{display:flex;justify-content:space-between;padding:0 20px 0 56px}
  .next{all:unset;width:64px;height:64px;margin-top:61px}
  .next ui-icon{width:64px;height:64px}
  .view{font:23px/54px Inter,sans-serif;height:54px;width:120px;border:0;border-radius:10px;background:#242424;color:#f0f0f0;display:flex;align-items:center;justify-content:center;gap:10px;padding:0}
  .view ui-icon{width:22px;height:22px}
  .share{flex:1;min-height:0;overflow:hidden;margin:0 60px 0 59px;display:flex;flex-direction:column}
  .bar{height:106px;box-sizing:border-box;display:flex;justify-content:space-between;align-items:flex-start;padding:11px 24px 0 22px;
    border-bottom:2px solid #4a4a4a;
    background:linear-gradient(rgba(255,255,255,.05),rgba(0,0,0,.12)),linear-gradient(90deg,#262626 0,#494949 10%,#494949 24%,#333233 34%,#343434 90%,#272727 100%)}
  .grp{display:flex;gap:35px}.grp.l{gap:38px}.grp.c{margin-left:14px}
  .leave{border:0;width:128px;height:56px;margin-top:14px;border-radius:16px;background:#ae3631;color:#fff;font:700 25px/56px Inter,sans-serif;padding:0}
  .enc{position:absolute;left:20px;top:294px;width:56px;height:56px;border-radius:12px;background:rgba(14,14,14,.8);display:flex;align-items:center;justify-content:center}
  .enc ui-icon{width:26px;height:28px}
  .recd{position:absolute;left:96px;top:306px;display:flex;align-items:center;gap:9px;font:700 24px/32px Inter,sans-serif;color:#fff;text-shadow:0 2px 5px rgba(0,0,0,.8)}
  .recd i{width:20px;height:20px;border-radius:50%;background:#ee5350;box-shadow:0 0 8px #ee5350}
</style>
<div class="title">
  <div class="lights"><i class="r"></i><i class="y"></i><i class="g"></i></div>
  <div class="banner"><div class="msg"><span>You are viewing VASUNDHARA GHATE's screen</span><ui-icon name="rec"></ui-icon></div>
  <div class="optbg"><button class="opt">View Options<ui-icon name="chevdown"></ui-icon></button></div></div>
  <div class="balance"></div>
</div>
<div class="strip">
  <div class="tiles">
    <participant-tile avatar="A" color="#4934a0" size="140" wide>PE04 Aniruddha_She...</participant-tile>
    <participant-tile avatar="V" color="#7b9099" size="96" active>VASUNDHARA GHATE</participant-tile>
    <participant-tile short="Mehul Navala...">Mehul Navalakha</participant-tile>
    <participant-tile short="PE06 Hrishike...">PE06 Hrishikesh Vaze</participant-tile>
    <participant-tile short="PE58 Heet Sh...">PE58 Heet Shah</participant-tile>
    <participant-tile short="PG_23_Sama..." wide>PG_23_Samarjit Sona...</participant-tile>
  </div>
  <div class="right"><button class="next" aria-label="Next"><ui-icon name="next"></ui-icon></button>
  <button class="view"><ui-icon name="gallery"></ui-icon>View</button></div>
</div>
<div class="share"><slot></slot></div>
<div class="bar">
  <div class="grp l"><tool-item icon="mic" caret>Unmute</tool-item><tool-item icon="video" caret>Start Video</tool-item></div>
  <div class="grp c"><tool-item icon="people" count="39" caret>Participants</tool-item><tool-item icon="chat">Chat</tool-item>
  <tool-item icon="share" green>Share Screen</tool-item><tool-item icon="cc">Live Transcript</tool-item>
  <tool-item icon="react">Reactions</tool-item><tool-item icon="zapps">Apps</tool-item></div>
  <button class="leave">Leave</button>
</div>
<div class="enc"><ui-icon name="shield"></ui-icon></div>
<div class="recd"><i></i>Recording</div>`);

/* ---------- shared browser ---------- */
define('browser-tab', el => `
<style>
  :host{display:flex;align-items:center;box-sizing:border-box;width:279px;padding:0 13px 0 19px;color:#55575c;position:relative;
    font:18px/24px "Open Sans",sans-serif;white-space:nowrap}
  :host::after{content:"";position:absolute;right:0;top:11px;bottom:10px;width:2px;background:#94959b}
  :host([last])::after,:host([current])::after{display:none}
  :host([current]){width:285px;padding-right:19px;background:#fff;border-radius:12px 12px 0 0}
  ui-icon.f{width:24px;height:24px;margin-right:12px}
  .t{flex:1;min-width:0;overflow:hidden}
  :host([fade]) .t{-webkit-mask-image:linear-gradient(90deg,#000 84%,transparent 100%);mask-image:linear-gradient(90deg,#000 84%,transparent 100%)}
  button{all:unset;margin-left:8px;color:#3c4043}
  button ui-icon{width:20px;height:20px}
</style>
<ui-icon class="f" name="${el.getAttribute('icon')}"></ui-icon><span class="t"><slot></slot></span><button aria-label="Close tab"><ui-icon name="x"></ui-icon></button>`);

define('download-item', el => `
<style>
  :host{display:flex;align-items:center;box-sizing:border-box;width:360px;height:64px;padding:0 27px 0 26px;border-right:2px solid #c9cacd;
    font:19px/26px "Open Sans",sans-serif;color:#55575c;white-space:nowrap}
  .f{width:24px;height:24px;margin-right:23px}
  span{flex:1}
  .c{width:14px;height:9px;color:#55575c}
</style>
<ui-icon class="f" name="${el.getAttribute('icon')}"></ui-icon><span><slot></slot></span><ui-icon class="c" name="chevup"></ui-icon>`);

define('chrome-window', `
<style>
  :host{display:flex;flex-direction:column;flex:1;min-height:0;background:#fff;font:18px/24px "Open Sans",sans-serif;color:#45474b;white-space:nowrap}
  .strip{display:flex;height:53px;flex:none;background:#dfdfe4;padding-left:15px}
  .strip .plus{all:unset;align-self:center;margin-left:22px;color:#3c4043}
  .plus ui-icon{width:20px;height:20px}
  .ctl{margin-left:auto;display:flex;align-items:center;padding:0 27px 6px 0;gap:53px}
  .ctl ui-icon{width:17px;height:17px}.ctl .d{width:22px;height:22px;margin-top:6px;margin-right:-4px}
  .nav{display:flex;align-items:center;flex:none;gap:23px;padding:7px 30px 0 24px;color:#55585c}
  .nav>ui-icon{width:22px;height:22px}
  .nav .b{display:flex;gap:27px}.b ui-icon{width:22px;height:22px}
  .b .off{color:#b8babd}
  .omni{flex:1;height:42px;border-radius:21px;background:#f2f2f4;display:flex;align-items:center;gap:15px;padding:0 16px}
  .omni ui-icon{width:22px;height:22px}
  input{flex:1;border:0;outline:0;background:none;padding:0;height:42px;font:20px/42px "Open Sans",sans-serif;color:#4d4f54}
  .me{width:34px;height:34px;border-radius:50%;background:#6d2b9b;color:#fff;font-size:15px;line-height:34px;text-align:center}
  .nav .dots{width:6px;height:22px;margin-left:5px}
  .marks{display:flex;align-items:center;height:57px;flex:none;padding:0 23px 0 24px;gap:27px;border-bottom:1px solid #e0d2d6;box-sizing:border-box}
  .marks a{display:flex;align-items:center;gap:13px;color:inherit;text-decoration:none;font-size:17px}
  .s{width:22px;height:22px}.yt{width:26px;height:20px}.mp{width:18px;height:26px}.dc{width:24px;height:26px}
  .marks .rl{margin-left:auto;border-left:2px solid #d5d6d9;padding:4px 0 4px 18px;font-size:18px}
  .page{flex:1;min-height:0;overflow:hidden;background:#f5c3cc;display:flex;flex-direction:column;border-bottom:2px solid #e8c6cc}
  .dls{display:flex;flex:none;height:43px;overflow:hidden;padding-left:5px;align-items:flex-start;background:#fff}
  .items{display:flex;padding-top:11px}
  .all{margin:18px 15px 0 auto;display:flex;align-items:center;gap:18px;color:#6b6d72}
  .all button{font:600 18px/46px "Open Sans",sans-serif;width:120px;height:50px;border:2px solid #dadce0;border-radius:5px;background:#fff;color:#4379de;padding:0}
  .all ui-icon{width:22px;height:22px}
</style>
<div class="strip">
  <browser-tab icon="gmail" fade>Folder shared with you</browser-tab><browser-tab icon="drive" fade>Problem Statement and</browser-tab>
  <browser-tab icon="drive">Code - Google Drive</browser-tab><browser-tab icon="drive">PPT - Google Drive</browser-tab>
  <browser-tab icon="xampp" fade>localhost/welcome.html</browser-tab><browser-tab icon="xampp" fade last>WTL LAB 1 : HTML Basic</browser-tab>
  <browser-tab icon="xampp" fade current>localhost/wtl/stud_reg</browser-tab>
  <button class="plus" aria-label="New tab"><ui-icon name="plus"></ui-icon></button>
  <div class="ctl"><ui-icon class="d" name="drop"></ui-icon><ui-icon name="min"></ui-icon><ui-icon name="restore"></ui-icon><ui-icon name="close"></ui-icon></div>
</div>
<div class="nav">
  <div class="b"><ui-icon name="back"></ui-icon><ui-icon class="off" name="fwd"></ui-icon><ui-icon name="reload"></ui-icon></div>
  <div class="omni"><ui-icon name="info"></ui-icon><input type="text" aria-label="Address" value="localhost/wtl/stud_reg.html"><ui-icon name="star"></ui-icon></div>
  <ui-icon name="puzzle"></ui-icon><span class="me">V</span><ui-icon class="dots" name="dots"></ui-icon>
</div>
<div class="marks">
  <a href="#"><ui-icon class="s" name="apps"></ui-icon>Apps</a><a href="#"><ui-icon class="s" name="gmail"></ui-icon>Gmail</a>
  <a href="#"><ui-icon class="yt" name="youtube"></ui-icon>YouTube</a><a href="#"><ui-icon class="mp" name="maps"></ui-icon>Maps</a>
  <a href="#"><ui-icon class="dc" name="doc"></ui-icon>mali</a>
  <a class="rl" href="#"><ui-icon class="s" name="reading"></ui-icon>Reading list</a>
</div>
<div class="page"><slot></slot></div>
<div class="dls">
  <div class="items"><download-item icon="word">Assignment 1-Pr....docx</download-item><download-item icon="word">Assignment 1-HT....docx</download-item><download-item icon="rar">drive-download-20....zip</download-item></div>
  <div class="all"><button>Show all</button><ui-icon name="x"></ui-icon></div>
</div>`);

/* ---------- the signup page ---------- */
define('signup-form', `
<style>
  :host{display:block;position:relative;padding-top:14px;font:37px/42px "Liberation Serif",serif;color:#111;text-align:center;white-space:nowrap}
  h1{font-size:49px;line-height:56px;font-weight:700;margin:0 0 34px;color:#000}
  form{display:flex;justify-content:center}
  fieldset{min-width:0;width:930px;box-sizing:border-box;border:2px solid #8f8488;margin:0;padding:15px 0 24px}
  input[type=text],select,button{font:21px/26px "Liberation Sans",sans-serif;color:#111}
  input[type=text]{width:263px;height:34px;box-sizing:border-box;border:2px solid #85797d;border-radius:3px;background:#fff;padding:0 4px;margin:0 0 1px}
  input::placeholder{color:#7c7c7c;opacity:1}
  input[type=radio],input[type=checkbox]{appearance:none;width:18px;height:18px;border:1px solid #7d7175;background:#fff;margin:0 7px;border-radius:3px}
  input[type=radio]{border-radius:50%;width:19px;height:19px}
  select{appearance:none;width:115px;height:28px;border:2px solid #85797d;border-radius:3px;padding:0 6px;line-height:24px;
    background:#fff url('data:image/svg+xml,<svg xmlns="http://www.w3.org/2000/svg" viewBox="0 0 16 10"><path d="M2 2l6 6 6-6" fill="none" stroke="black" stroke-width="3"/></svg>') no-repeat right 7px center/14px 9px}
  button{width:86px;height:34px;border:2px solid #85797d;border-radius:3px;background:#efefef;padding:0;margin-top:42px;display:inline-block;vertical-align:top}
  ui-icon{position:absolute;left:979px;top:125px;width:16px;height:24px}
</style>
<h1>Student Signup Form</h1>
<form>
  <fieldset>
    <div>Enter your details below</div>
    <div><label for="r">Roll No</label> <input id="r" type="text" placeholder="RollNo"></div>
    <div><label for="n">Name</label> <input id="n" type="text" placeholder="Enter name"></div>
    <div><label for="c">Contact :</label> <input id="c" type="text" placeholder="Enter valid phone numbe"></div>
    <div>Select Gender <input type="radio" name="g" id="g1"> <label for="g1">Male</label> <input type="radio" name="g" id="g2"> <label for="g2">Female</label> <input type="radio" name="g" id="g3"> <label for="g3">Other</label></div>
    <div><label for="city">Select the city :</label> <select id="city"><option>Pune</option></select></div>
    <div>Select your skills <input type="checkbox" id="k1"> <label for="k1">C Programming</label> <input type="checkbox" id="k2"> <label for="k2">Java Programming</label></div>
    <div><input type="checkbox" id="k3"> <label for="k3">Python Programming</label> <input type="checkbox" id="k4"> <label for="k4">C++ Programming</label></div>
    <button type="button">submit</button>
  </fieldset>
</form>
<ui-icon name="cursor"></ui-icon>`);

/* ---------- dock ---------- */
define('dock-app', el => `
<style>
  :host{display:flex;position:relative;width:106px;height:128px;align-items:center;justify-content:center;box-sizing:border-box;padding-bottom:10px}
  ui-icon{width:${el.getAttribute('w') || 80}px;height:${el.getAttribute('h') || 80}px;filter:drop-shadow(0 2px 2px rgba(0,0,0,.3))}
  :host([open])::after{content:"";position:absolute;bottom:4px;left:49px;width:8px;height:8px;border-radius:50%;background:#1a0b74}
  .badge{position:absolute;right:1px;top:10px;width:38px;height:38px;border-radius:50%;background:#e5524a;color:#fff;font:24px/38px Inter,sans-serif;text-align:center}
</style>
<ui-icon name="${el.getAttribute('icon')}"></ui-icon>${el.hasAttribute('badge') ? `<span class="badge">${el.getAttribute('badge')}</span>` : ''}`);

define('mac-dock', `
<style>
  :host{display:flex;height:128px;align-items:center;padding:0 5px;border-radius:38px;box-shadow:inset 0 0 0 2px rgba(190,170,255,.55);
    background:linear-gradient(100deg,#6a5cc4 0,#7364d8 22%,#7d61e6 45%,#8363f4 65%,#9d60ee 84%,#a65eee 100%)}
  i{width:2px;height:96px;background:#4c31b4;margin:0 23px}
</style>
<dock-app icon="finder" open></dock-app><dock-app icon="safari" open></dock-app><dock-app icon="prefs" badge="1"></dock-app><i></i>
<dock-app icon="chrome" open></dock-app><dock-app icon="terminal" open></dock-app><dock-app icon="vscode" open></dock-app><dock-app icon="zoomapp" w="86" h="86" open></dock-app><i></i>
<dock-app icon="miniwin" w="92" h="16"></dock-app><dock-app icon="trash" w="70" h="92"></dock-app>`);
</script>
</body>
</html>
